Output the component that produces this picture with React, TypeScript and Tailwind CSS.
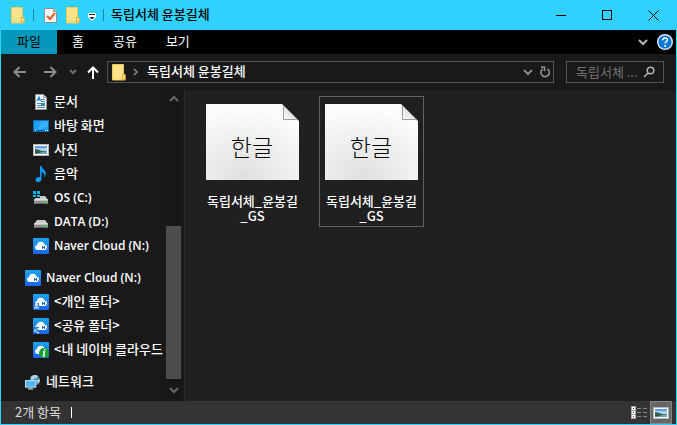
import type { ReactNode } from "react";

type IconName =
  | "document"
  | "desktop"
  | "picture"
  | "music"
  | "osDrive"
  | "drive"
  | "cloud"
  | "cloudUser"
  | "cloudShare"
  | "cloudInfo"
  | "network";

type TreeItem = { label: string; icon: IconName; latin?: boolean; root?: boolean };

const groups: TreeItem[][] = [
  [
    { label: "문서", icon: "document" },
    { label: "바탕 화면", icon: "desktop" },
    { label: "사진", icon: "picture" },
    { label: "음악", icon: "music" },
    { label: "OS (C:)", icon: "osDrive", latin: true },
    { label: "DATA (D:)", icon: "drive", latin: true },
    { label: "Naver Cloud (N:)", icon: "cloud", latin: true },
  ],
  [
    { label: "Naver Cloud (N:)", icon: "cloud", latin: true, root: true },
    { label: "<개인 폴더>", icon: "cloudUser" },
    { label: "<공유 폴더>", icon: "cloudShare" },
    { label: "<내 네이버 클라우드", icon: "cloudInfo" },
  ],
  [{ label: "네트워크", icon: "network", root: true }],
];

const files = [
  { id: 1, name: "독립서체_윤봉길", suffix: "_GS", focused: false },
  { id: 2, name: "독립서체_윤봉길", suffix: "_GS", focused: true },
];

function FolderIcon() {
  return (
    <svg width="14" height="17" viewBox="0 0 14 17" className="shrink-0">
      <path d="M.5 .5h11v10h1.500v5.500H.5z" fill="#ffe38b" stroke="#ecc95c" />
      <path d="M1 14h9v2H1z" fill="#f9da74" />
      <path d="M10.500 15.500v-5h2.500v5z" fill="#ffe79a" stroke="#dfb23c" />
    </svg>
  );
}

function CloudTile({ children }: { children?: ReactNode }) {
  return (
    <svg width="16" height="16" viewBox="0 0 16 16">
      <defs>
        <linearGradient id="cloud-tile" x1="0" y1="0" x2="0" y2="1">
          <stop offset="0" stopColor="#1ba6f2" />
          <stop offset="1" stopColor="#1b64ea" />
        </linearGradient>
      </defs>
      <rect width="16" height="16" rx="1" fill="url(#cloud-tile)" />
      <path d="M4.500 12a2.600 2.600 0 0 1-.6-5.100 3.900 3.900 0 0 1 7.600-.4 2.800 2.800 0 0 1 .5 5.500z" fill="#fff" />
      <path d="M9.500 8v3M11.500 8v3M9.500 9.500h2" fill="none" stroke="#1467c8" />
      {children}
    </svg>
  );
}

function DriveIcon({ windows }: { windows?: boolean }) {
  return (
    <svg width="16" height="16" viewBox="0 0 16 16">
      <path d="M4 6h8l3 4H1z" fill="#c9c9c9" />
      <path d="M1 10h14v4H1z" fill="#8d8d8d" />
      <path d="M1 9.500h14v1H1z" fill="#eee" />
      <path d="M2 13.500h12" stroke="#666" />
      <rect x="11" y="11" width="2" height="2" fill="#35d843" />
      {windows && (
        <>
          <path d="M0 1h7v7H0z" fill="#191919" />
          <path d="M0 1h3v3H0zM4 1h3v3H4zM0 5h3v2H0zM4 5h3v2H4z" fill="#13b5ee" />
        </>
      )}
    </svg>
  );
}

function PictureIcon() {
  return (
    <svg width="16" height="12" viewBox="0 0 16 12">
      <rect width="16" height="12" fill="#b9b9b9" />
      <rect x="1" y="1" width="14" height="10" fill="#fff" />
      <rect x="2" y="2" width="12" height="8" fill="#a9d4f8" />
      <path d="M2 2h12v2H2z" fill="#5f9fea" />
      <path d="M2 5l3 .5 4 1.500 5 .5V8H2z" fill="#38664c" />
      <path d="M2 8h12v2H2z" fill="#6fa3bd" />
      <path d="M2 8h7l-5 1.500H2z" fill="#294e3e" />
    </svg>
  );
}

function TreeIcon({ name }: { name: IconName }) {
  switch (name) {
    case "document":
      return (
        <svg width="16" height="16" viewBox="0 0 16 16">
          <path d="M2.500.5h8l3 3v12h-11z" fill="#f7f7f7" stroke="#9a9a9a" />
          <path d="M10.500.5v3h3" fill="#ddd" stroke="#9a9a9a" />
          <path d="M4 7l2-4 1.500 4M5 5.500h2" fill="none" stroke="#1487d8" strokeWidth="1.300" />
          <path d="M8 5.500h4M8 7.500h4M4 9.500h4M4 11.500h4M4 13.500h8" stroke="#4a8fc4" />
          <rect x="8" y="9" width="4" height="3" fill="#358aa8" />
        </svg>
      );
    case "desktop":
      return (
        <svg width="16" height="12" viewBox="0 0 16 12">
          <rect x=".5" y=".5" width="15" height="11" fill="#1aa0f7" stroke="#0b70bd" />
          <path d="M9 1h6v6L4 10z" fill="#39b0fb" />
          <path d="M1 10.500h14" stroke="#0a5fa5" />
          <path d="M2 10.500h1M12 10.500h1M14 10.500h1" stroke="#fff" />
        </svg>
      );
    case "picture":
      return <PictureIcon />;
    case "music":
      return (
        <svg width="16" height="16" viewBox="0 0 16 16">
          <path
            d="M7 0h1.500c.3 3 4.300 3.800 4.300 7.500 0 1.600-.7 2.800-1.600 3.500.8-2.700-.3-4.300-2.700-5v7c0 1.800-1.300 3-3.200 3-1.700 0-2.800-.9-2.800-2.300C2.500 12 4.200 11 6 11l1 .2z"
            fill="#0c9cf4"
          />
        </svg>
      );
    case "osDrive":
      return <DriveIcon windows />;
    case "drive":
      return <DriveIcon />;
    case "cloudUser":
      return (
        <CloudTile>
          <path d="M0 9h6v6H0z" fill="#2a7eea" />
          <circle cx="3.500" cy="10.500" r="1.500" fill="#d9ebff" />
          <path d="M1 14.500c0-3 5-3 5 0z" fill="#b5d5ff" />
        </CloudTile>
      );
    case "cloudShare":
      return (
        <CloudTile>
          <path d="M0 9h6v6H0z" fill="#2a7eea" />
          <path d="M5 10.500L1.500 12.500 5 14.500" fill="none" stroke="#9bc8ff" />
          <path d="M4.500 10H6v1.500H4.500zM1 12h1.500v1.500H1zM4.500 14H6v1.500H4.500z" fill="#cfe4ff" />
        </CloudTile>
      );
    case "cloudInfo":
      return (
        <CloudTile>
          <circle cx="11" cy="11" r="5" fill="#16a22f" />
          <path d="M11.700 7v1.600M10 10h1.500l-1 4h1.300" fill="none" stroke="#fff" strokeWidth="1.400" />
        </CloudTile>
      );
    case "network":
      return (
        <svg width="17" height="16" viewBox="0 0 17 16">
          <circle cx="10.500" cy="6" r="5.500" fill="#4a86a8" />
          <path d="M6 3c2-3 6-3 8-1l-2 2-3 1-2 2zM12 6l3-1 1 2-2 3z" fill="#a9d3e6" />
          <rect x=".5" y="6.500" width="11" height="7" fill="#4fb6f5" stroke="#c8e6f7" />
          <path d="M5 14h2v1h2v1H3v-1h2z" fill="#b9d5e6" />
        </svg>
      );
    default:
      return <CloudTile />;
  }
}

function ChevronDown({ className }: { className?: string }) {
  return (
    <svg width="10" height="7" viewBox="0 0 10 7" className={className} fill="none" stroke="currentColor" strokeWidth="2">
      <path d="M1 1l4 4 4-4" />
    </svg>
  );
}

function TitleBar() {
  return (
    <header className="flex h-[30px] shrink-0 items-center bg-[#30d2fd] pl-[10px] text-black">
      <FolderIcon />
      <span className="ml-2 h-3 w-px bg-[#1287a5]" />
      <button aria-label="속성" className="ml-[10px]">
        <svg width="14" height="17" viewBox="0 0 14 17">
          <path d="M.5 1.500h9l3 3v11H.5z" fill="#fafafa" stroke="#8f8f8f" />
          <path d="M9.500 1.500v3h3" fill="#ddd" stroke="#8f8f8f" />
          <path d="M3 9l3 3 5-6" fill="none" stroke="#ed5a24" strokeWidth="2" />
        </svg>
      </button>
      <button aria-label="새 폴더" className="ml-2">
        <FolderIcon />
      </button>
      <button aria-label="빠른 실행 도구 모음 사용자 지정" className="ml-2">
        <svg width="8" height="8" viewBox="0 0 8 8" className="mt-1">
          <path d="M0 0h8v3H0zM0 3h8v1L4 8 0 4z" fill="#fff" />
          <path d="M1 1h6v1H1zM1.500 4h5L4 6.500z" fill="#222" />
        </svg>
      </button>
      <span className="ml-[7px] h-3 w-px bg-[#1287a5]" />
      <h1 className="ml-[7px] pb-0.5 text-[13px] font-medium whitespace-nowrap">독립서체 윤봉길체</h1>
      <div className="ml-auto flex h-full">
        <button aria-label="최소화" className="flex w-[46px] items-center justify-center">
          <svg width="11" height="11" viewBox="0 0 11 11" stroke="currentColor">
            <path d="M0 5.500h10" />
          </svg>
        </button>
        <button aria-label="최대화" className="flex w-[46px] items-center justify-center">
          <svg width="10" height="10" viewBox="0 0 10 10" fill="none" stroke="currentColor">
            <rect x=".5" y=".5" width="9" height="9" />
          </svg>
        </button>
        <button aria-label="닫기" className="flex w-[46px] items-center justify-center">
          <svg width="11" height="11" viewBox="0 0 11 11" stroke="currentColor">
            <path d="M.5.5l10 10M10.500.5l-10 10" />
          </svg>
        </button>
      </div>
    </header>
  );
}

function RibbonTabs() {
  return (
    <nav className="flex h-6 shrink-0 items-stretch gap-px bg-black pr-[3px] text-[13px] leading-none text-white">
      <button className="w-14 bg-[#0299bb] pb-1 text-black">파일</button>
      <button className="px-[14px] pb-1">홈</button>
      <button className="px-[14px] pb-1">공유</button>
      <button className="px-[14px] pb-1">보기</button>
      <button aria-label="리본 확장" className="ml-auto mr-2 flex items-center">
        <ChevronDown className="text-[#b5b5b5]" />
      </button>
      <button aria-label="도움말" className="flex items-center">
        <svg width="16" height="16" viewBox="0 0 16 16">
          <circle cx="8" cy="8" r="7.300" fill="#0a78d7" stroke="#dce9f5" strokeWidth="1.400" />
          <path d="M5.800 6.200c0-3 4.600-2.800 4.600-.3 0 1.600-2.200 1.700-2.200 3.600" fill="none" stroke="#fff" strokeWidth="1.500" />
          <rect x="7.300" y="11" width="1.700" height="1.700" fill="#fff" />
        </svg>
      </button>
    </nav>
  );
}

function AddressBar() {
  return (
    <div className="flex h-9 shrink-0 items-center bg-[#191919] px-3 text-[#8c8c8c]">
      <button aria-label="뒤로">
        <svg width="14" height="12" viewBox="0 0 14 12" fill="none" stroke="currentColor" strokeWidth="2">
          <path d="M13 6H2M6.500 1L1.500 6l5 5" />
        </svg>
      </button>
      <button aria-label="앞으로" className="ml-4">
        <svg width="14" height="12" viewBox="0 0 14 12" fill="none" stroke="currentColor" strokeWidth="2">
          <path d="M1 6h11M7.500 1l5 5-5 5" />
        </svg>
      </button>
      <button aria-label="최근 위치" className="ml-3">
        <svg width="8" height="6" viewBox="0 0 8 6" fill="none" stroke="#6e6e6e" strokeWidth="2">
          <path d="M1 1l3 3 3-3" />
        </svg>
      </button>
      <button aria-label="위로" className="ml-[10px] text-white">
        <svg width="12" height="13" viewBox="0 0 12 13" fill="none" stroke="currentColor" strokeWidth="2">
          <path d="M6 13V2M1 6.500L6 1.500l5 5" />
        </svg>
      </button>
      <div className="ml-2 flex h-[22px] min-w-0 flex-1 items-center border border-[#535353] pl-1">
        <FolderIcon />
        <svg width="6" height="8" viewBox="0 0 6 8" className="ml-[7px] shrink-0" fill="none" stroke="currentColor" strokeWidth="1.500">
          <path d="M1 1l3 3-3 3" />
        </svg>
        <span className="ml-2 truncate pb-0.5 text-[13px] font-medium text-white">독립서체 윤봉길체</span>
        <button aria-label="이전 위치" className="ml-auto">
          <ChevronDown className="text-[#8c8c8c]" />
        </button>
        <span className="ml-[2px] h-full w-px bg-[#222]" />
        <button aria-label="새로 고침" className="mr-[2px] ml-[3px]">
          <svg width="12" height="12" viewBox="0 0 12 12" fill="none" stroke="currentColor" strokeWidth="1.700">
            <path d="M8.500 3a4.200 4.200 0 1 1-5 .2M2 1.200h3.500v4" />
          </svg>
        </button>
      </div>
      <label className="ml-3 flex h-[22px] w-[98px] items-center border border-[#535353] pr-2 pl-[9px]">
        <input
          type="text"
          aria-label="검색"
          placeholder="독립서체 ..."
          className="h-5 w-full min-w-0 bg-transparent pb-0.5 text-[13px] outline-none placeholder:text-[#717171]"
        />
        <svg width="12" height="12" viewBox="0 0 12 12" className="shrink-0" fill="none" stroke="#b0b0b0" strokeWidth="1.600">
          <circle cx="7.500" cy="4.500" r="3.300" />
          <path d="M5 7L1 11" />
        </svg>
      </label>
    </div>
  );
}

function Sidebar() {
  return (
    <aside className="flex w-[184px] shrink-0 border-r border-[#2b2b2b] bg-[#191919]">
      <div className="flex min-w-0 flex-1 flex-col gap-2">
        {groups.map((group, i) => (
          <ul key={i}>
            {group.map((item) => (
              <li key={item.label} className={item.root ? "pl-6" : "pl-8"}>
                <button className="flex h-6 w-full items-center gap-[5px] text-left whitespace-nowrap text-white">
                  <span className="flex w-4 shrink-0 justify-center">
                    <TreeIcon name={item.icon} />
                  </span>
                  <span
                    className={
                      item.latin
                        ? "font-['Open_Sans','Noto_Sans_CJK_KR',sans-serif] text-[12px] font-semibold"
                        : "pb-0.5 text-[13px] font-medium"
                    }
                  >
                    {item.label}
                  </span>
                </button>
              </li>
            ))}
          </ul>
        ))}
      </div>
      <div className="mr-[3px] flex w-[15px] flex-col items-center bg-[#171717] text-[#686868]">
        <button aria-label="위로 스크롤" className="flex h-4 items-center">
          <ChevronDown className="rotate-180" />
        </button>
        <div className="flex w-full flex-1 items-end">
          <div className="h-[56%] w-full bg-[#4d4d4d]" />
        </div>
        <button aria-label="아래로 스크롤" className="flex h-[22px] items-center">
          <ChevronDown />
        </button>
      </div>
    </aside>
  );
}

function FontFileIcon({ id }: { id: number }) {
  return (
    <svg width="93" height="76" viewBox="0 0 93 76" className="mx-auto">
      <defs>
        <radialGradient id={`paper-${id}`} cx="0.4" cy="0.95" r="0.9">
          <stop offset="0" stopColor="#e0e0e0" />
          <stop offset="1" stopColor="#fcfcfc" />
        </radialGradient>
        <linearGradient id={`fold-${id}`} x1="0" y1="1" x2="1" y2="0">
          <stop offset="0" stopColor="#fff" />
          <stop offset="1" stopColor="#c4c4c4" />
        </linearGradient>
      </defs>
      <path d="M0 0h76l17 17v59H0z" fill={`url(#paper-${id})`} />
      <path d="M77.500 1.500v14h14z" fill={`url(#fold-${id})`} stroke="#9c9c9c" />
      <text
        x="46"
        y="52"
        textAnchor="middle"
        fill="#080808"
        className="font-['Noto_Sans_CJK_KR',sans-serif] text-[23px] font-light"
      >
        한글
      </text>
    </svg>
  );
}

function FileGrid() {
  return (
    <main className="flex flex-1 flex-wrap content-start gap-[14px] bg-[#202020] pt-[6px] pl-[15px]">
      {files.map((file) => (
        <button
          key={file.id}
          className={`w-[105px] border pt-[7px] pb-[3px] text-center text-[13px] leading-[15px] text-white ${
            file.focused ? "border-[#636363]" : "border-transparent"
          }`}
        >
          <FontFileIcon id={file.id} />
          <span className="mt-[13px] block font-medium">
            {file.name}
            <br />
            {file.suffix}
          </span>
        </button>
      ))}
    </main>
  );
}

function StatusBar() {
  return (
    <footer className="flex h-[23px] shrink-0 items-center bg-[#333] pr-1 pl-[14px] text-[13px] text-[#dcdcdc]">
      <span className="pb-0.5">2개 항목</span>
      <span className="ml-[10px] h-[11px] w-px bg-white" />
      <button aria-label="자세히" className="ml-auto">
        <svg width="16" height="13" viewBox="0 0 16 13">
          <path d="M0 0h5v13H0z" fill="#ababab" />
          <path d="M1 1h3v3H1zM1 5h3v3H1zM1 9h3v3H1z" fill="#fff" />
          <path d="M2 2h1v1H2z" fill="#222" />
          <path d="M2 6h1v1H2z" fill="#1685d8" />
          <path d="M2 10h1v1H2z" fill="#d42020" />
          <path d="M6 2.500h4M12 2.500h4M6 6.500h4M12 6.500h4M6 10.500h4M12 10.500h4" stroke="#858585" />
        </svg>
      </button>
      <button
        aria-label="큰 아이콘"
        aria-pressed="true"
        className="ml-[3px] flex h-full w-[22px] items-center justify-center border border-[#868686] bg-[#666]"
      >
        <PictureIcon />
      </button>
    </footer>
  );
}

export default function App() {
  return (
    <div className="flex min-h-screen flex-col border border-t-0 border-[#30d2fd] bg-[#191919] font-['Noto_Sans_CJK_KR',sans-serif]">
      <TitleBar />
      <RibbonTabs />
      <AddressBar />
      <div className="flex flex-1">
        <Sidebar />
        <FileGrid />
      </div>
      <StatusBar />
    </div>
  );
}
